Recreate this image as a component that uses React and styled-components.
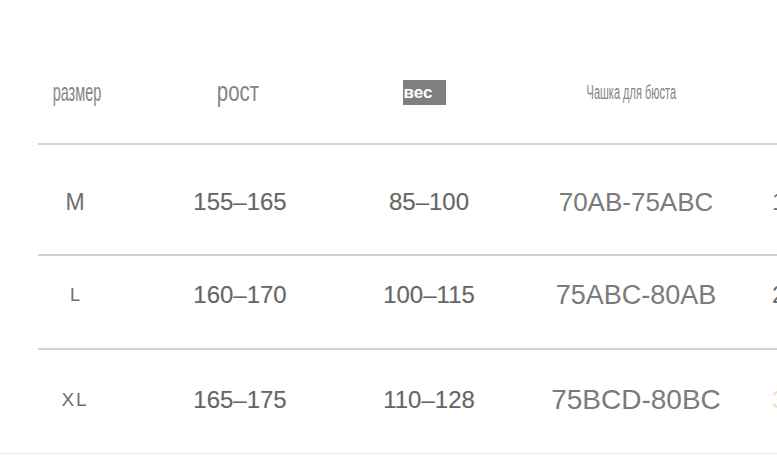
import React from 'react';
import styled, { createGlobalStyle } from 'styled-components';

const GlobalStyle = createGlobalStyle`
    html, body {
        margin: 0;
        padding: 0;
        background: #ffffff;
        overflow: hidden;
    }
    body {
        font-family: 'Liberation Sans', Arial, sans-serif;
    }
`

const Table = styled.div`
    width: 777px;
    height: 472px;
    overflow: hidden;
    display: flex;
    flex-direction: column;
`

const Row = styled.div`
    display: grid;
    grid-template-columns: 74px 256px 122px 282px 60px;
    align-items: center;
    margin-left: 38px;
    width: 794px;
    height: ${props => props.$height}px;
    padding-top: ${props => props.$top || 0}px;
    padding-bottom: ${props => props.$bottom || 0}px;
    box-sizing: border-box;
    white-space: nowrap;
`

const Cell = styled.div`
    text-align: center;
    padding-left: ${props => props.$pad || 0}px;
`

const EdgeCell = styled.div`
    text-align: left;
    font-size: 24px;
    color: ${props => props.$color || '#6a6a6a'};
`

const Divider = styled.div`
    height: ${props => props.$thin ? 1 : 2}px;
    margin-left: ${props => props.$full ? 0 : 38}px;
    background: ${props => props.$thin ? '#e8e8e8' : '#d3d3d3'};
    flex-shrink: 0;
`

const HeadText = styled.span`
    display: inline-block;
    font-size: ${props => props.$size}px;
    color: #858585;
    transform: translateX(${props => props.$dx || 0}px) scaleX(${props => props.$sx});
    line-height: 1;
`

const Marked = styled.span`
    display: inline-block;
    width: 43px;
    height: 25px;
    box-sizing: border-box;
    padding-left: 1px;
    background: #7f7f7f;
    color: #ffffff;
    font-weight: bold;
    font-size: 17px;
    line-height: 26px;
    text-align: left;
    transform: translateX(-5px);
`

const Size = styled.span`
    display: inline-block;
    font-size: ${props => props.$size}px;
    color: #6f6f6f;
    letter-spacing: ${props => props.$ls || 0}px;
`

const Range = styled.span`
    font-size: 24px;
    color: #666666;
    text-shadow: 0 0 1px rgba(0, 0, 0, 0.15);
`

const Cup = styled.span`
    font-size: ${props => props.$size}px;
    color: #7b7b7b;
`

const rows = [
    { size: 'M', sizeFont: 23, ls: 0, height: 109, top: 5, bottom: 0, growth: '155–165', weight: '85–100', cup: '70AB-75ABC', cupFont: 26, edge: '1', edgeColor: '#6a6a6a' },
    { size: 'L', sizeFont: 18, ls: 0, height: 92, top: 0, bottom: 14, growth: '160–170', weight: '100–115', cup: '75ABC-80AB', cupFont: 27, edge: '2', edgeColor: '#6a6a6a' },
    { size: 'XL', sizeFont: 19, ls: 2, height: 103, top: 0, bottom: 3, growth: '165–175', weight: '110–128', cup: '75BCD-80BC', cupFont: 28, edge: '3', edgeColor: '#f0dcc0' },
]

const App = () => {
    return (
        <>
            <GlobalStyle />
            <Table>
                <Row $height={143} $top={41}>
                    <Cell>
                        <HeadText $size={25} $sx={0.58} $dx={-3}>размер</HeadText>
                    </Cell>
                    <Cell>
                        <HeadText $size={28} $sx={0.73} $dx={-2}>рост</HeadText>
                    </Cell>
                    <Cell>
                        <Marked>вес</Marked>
                    </Cell>
                    <Cell>
                        <HeadText $size={20} $sx={0.55}>Чашка для бюста</HeadText>
                    </Cell>
                    <EdgeCell />
                </Row>
                {rows.map(row => (
                    <React.Fragment key={row.size}>
                        <Divider />
                        <Row $height={row.height} $top={row.top} $bottom={row.bottom}>
                            <Cell>
                                <Size $size={row.sizeFont} $ls={row.ls}>{row.size}</Size>
                            </Cell>
                            <Cell>
                                <Range>{row.growth}</Range>
                            </Cell>
                            <Cell>
                                <Range>{row.weight}</Range>
                            </Cell>
                            <Cell $pad={10}>
                                <Cup $size={row.cupFont}>{row.cup}</Cup>
                            </Cell>
                            <EdgeCell $color={row.edgeColor}>{row.edge}</EdgeCell>
                        </Row>
                    </React.Fragment>
                ))}
                <Divider $thin $full />
            </Table>
        </>
    );
}

export default App
